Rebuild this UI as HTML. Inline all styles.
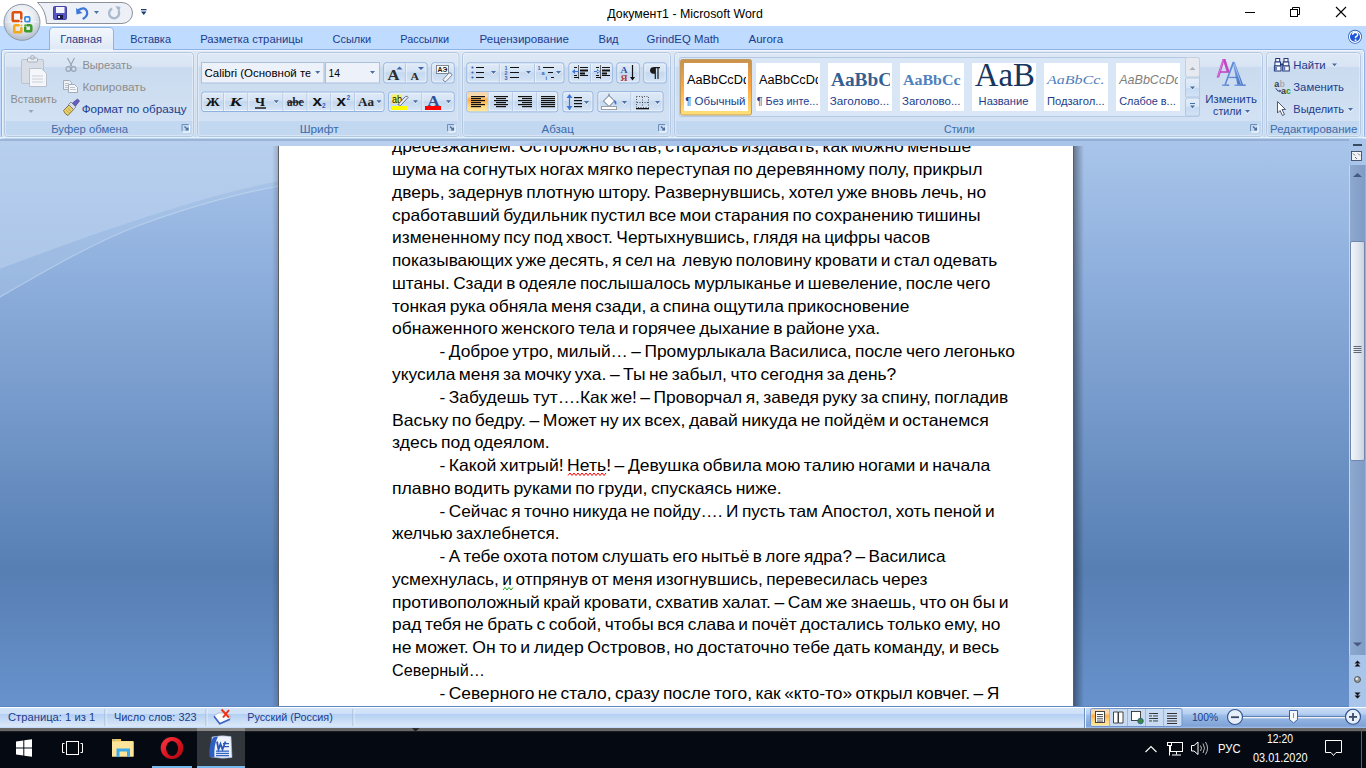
<!DOCTYPE html>
<html><head><meta charset="utf-8"><title>Документ1 - Microsoft Word</title>
<style>
html,body{margin:0;padding:0;width:1366px;height:768px;overflow:hidden;background:#fff;}
svg{display:block;font-family:"Liberation Sans",sans-serif;}
</style></head><body>
<svg width="1366" height="768" viewBox="0 0 1366 768">

<defs>
<linearGradient id="docbg" x1="0" y1="0" x2="0" y2="1">
 <stop offset="0" stop-color="#A9C5EA"/>
 <stop offset="0.25" stop-color="#8DAEDC"/>
 <stop offset="0.76" stop-color="#577FB4"/>
 <stop offset="1" stop-color="#6892CC"/>
</linearGradient>
<linearGradient id="grp" x1="0" y1="0" x2="0" y2="1">
 <stop offset="0" stop-color="#DEE8F5"/>
 <stop offset="0.165" stop-color="#D9E5F4"/>
 <stop offset="0.175" stop-color="#CADBEF"/>
 <stop offset="0.8" stop-color="#D2E1F3"/>
 <stop offset="1" stop-color="#D6E4F4"/>
</linearGradient>
<linearGradient id="lbl" x1="0" y1="0" x2="0" y2="1">
 <stop offset="0" stop-color="#C5DAF1"/>
 <stop offset="1" stop-color="#C1D8F0"/>
</linearGradient>
<linearGradient id="panel" x1="0" y1="0" x2="0" y2="1">
 <stop offset="0" stop-color="#DBE6F5"/>
 <stop offset="1" stop-color="#C6D9F0"/>
</linearGradient>
<linearGradient id="acttab" x1="0" y1="0" x2="0" y2="1">
 <stop offset="0" stop-color="#F4F8FD"/>
 <stop offset="1" stop-color="#DDE8F6"/>
</linearGradient>
<linearGradient id="btn" x1="0" y1="0" x2="0" y2="1">
 <stop offset="0" stop-color="#DFEAF7"/>
 <stop offset="0.42" stop-color="#D5E3F4"/>
 <stop offset="0.5" stop-color="#C5D8EF"/>
 <stop offset="1" stop-color="#D8E6F6"/>
</linearGradient>
<linearGradient id="orng" x1="0" y1="0" x2="0" y2="1">
 <stop offset="0" stop-color="#F6D2A6"/>
 <stop offset="0.2" stop-color="#FCDCAE"/>
 <stop offset="0.4" stop-color="#FFAC46"/>
 <stop offset="0.7" stop-color="#FFD580"/>
 <stop offset="1" stop-color="#FFEA9A"/>
</linearGradient>
<linearGradient id="selsty" x1="0" y1="0" x2="0" y2="1">
 <stop offset="0" stop-color="#C7924E"/>
 <stop offset="0.5" stop-color="#FFA640"/>
 <stop offset="1" stop-color="#FFE27A"/>
</linearGradient>
<linearGradient id="scrb" x1="0" y1="0" x2="0" y2="1">
 <stop offset="0" stop-color="#E4EEFA"/>
 <stop offset="0.5" stop-color="#D6E5F6"/>
 <stop offset="0.5" stop-color="#C5D9F2"/>
 <stop offset="1" stop-color="#D3E3F6"/>
</linearGradient>
<linearGradient id="pinkA" x1="0" y1="0" x2="0" y2="1">
 <stop offset="0" stop-color="#E070D8"/>
 <stop offset="1" stop-color="#A03AA8"/>
</linearGradient>
<linearGradient id="blueA" x1="0" y1="0" x2="1" y2="1">
 <stop offset="0" stop-color="#7FA8E8"/>
 <stop offset="1" stop-color="#3F6CC0"/>
</linearGradient>
<linearGradient id="status" x1="0" y1="0" x2="0" y2="1">
 <stop offset="0" stop-color="#D4E4F8"/>
 <stop offset="0.34" stop-color="#CFE1F8"/>
 <stop offset="0.37" stop-color="#B2CFF3"/>
 <stop offset="0.9" stop-color="#DAE7F7"/>
 <stop offset="1" stop-color="#C5DDFB"/>
</linearGradient>
<linearGradient id="statR" x1="0" y1="0" x2="0" y2="1">
 <stop offset="0" stop-color="#C8DCF6"/>
 <stop offset="0.3" stop-color="#B5CFF0"/>
 <stop offset="0.35" stop-color="#9DBEE8"/>
 <stop offset="0.9" stop-color="#7FA2D6"/>
 <stop offset="1" stop-color="#A6C2EA"/>
</linearGradient>
<linearGradient id="shL" x1="1" y1="0" x2="0" y2="0">
 <stop offset="0" stop-color="#000" stop-opacity="0.16"/>
 <stop offset="1" stop-color="#000" stop-opacity="0"/>
</linearGradient>
<linearGradient id="shR" x1="0" y1="0" x2="1" y2="0">
 <stop offset="0" stop-color="#000" stop-opacity="0.38"/>
 <stop offset="1" stop-color="#000" stop-opacity="0"/>
</linearGradient>
<linearGradient id="sbtrack" x1="0" y1="0" x2="1" y2="0">
 <stop offset="0" stop-color="#8FA9CF"/>
 <stop offset="1" stop-color="#7E9CC6"/>
</linearGradient>
<linearGradient id="sbthumb" x1="0" y1="0" x2="1" y2="0">
 <stop offset="0" stop-color="#F3F6FA"/>
 <stop offset="0.5" stop-color="#E1E7EF"/>
 <stop offset="1" stop-color="#C8D2DF"/>
</linearGradient>
<radialGradient id="obtn" cx="0.5" cy="0.35" r="0.6">
 <stop offset="0" stop-color="#FFFFFF"/>
 <stop offset="0.6" stop-color="#E6EAF0"/>
 <stop offset="1" stop-color="#B8C2D0"/>
</radialGradient>
</defs>

<rect x="0" y="0" width="1366" height="27" fill="#FFFFFF"/>
<rect x="0" y="26" width="1366" height="24" fill="#BFDBFF"/>
<rect x="0" y="49" width="1366" height="91" fill="#BFDBFF"/>
<rect x="1.5" y="49.5" width="1363" height="89" rx="3" fill="url(#panel)" stroke="#8DB2E3"/>
<rect x="2.5" y="50.5" width="1361" height="87" rx="2" fill="none" stroke="#FFFFFF" stroke-opacity="0.6"/>
<rect x="0" y="139" width="1366" height="568" fill="url(#docbg)"/>
<path d="M0,139 H560 C420,160 300,176 280,181 C200,196 90,235 0,269 Z" fill="#C4D9F2" fill-opacity="0.55"/>
<path d="M0,269 C90,235 200,196 280,181 C300,176 420,160 560,139 L560,150 C470,158 380,170 280,186 C240,193 190,207 140,225 C95,242 50,268 0,297 Z" fill="#B5CDEC" fill-opacity="0.35"/>
<path d="M0,297 C50,268 95,242 140,225 C190,207 240,193 280,186 C380,170 470,158 560,150" fill="none" stroke="#C6DAF2" stroke-opacity="0.6" stroke-width="1.2"/>
<rect x="0" y="139" width="1349" height="2" fill="#7F93B5" fill-opacity="0.45"/>
<rect x="272" y="146" width="6" height="561" fill="url(#shL)"/>
<rect x="1074" y="146" width="10" height="561" fill="url(#shR)"/>
<rect x="278" y="146" width="796" height="561" fill="#5E5E5E"/>
<rect x="279" y="146" width="794" height="561" fill="#FFFFFF"/>
<rect x="0" y="706" width="1366" height="22" fill="url(#status)"/>
<rect x="0" y="706" width="1366" height="1" fill="#5A85C0"/>
<rect x="0" y="707" width="1366" height="1" fill="#FFFFFF"/>
<rect x="0" y="728" width="1366" height="40" fill="#050A12"/>
<rect x="0" y="727" width="1366" height="1" fill="#C4DCFA"/>
<rect x="0" y="728" width="1366" height="3" fill="#686766"/>
<rect x="0" y="731" width="1366" height="1" fill="#1A1D22"/>
<clipPath id="pgclip"><rect x="279" y="146" width="794" height="561"/></clipPath>
<g clip-path="url(#pgclip)" font-size="16.5" fill="#000" word-spacing="-1.3">
<text x="392" y="152.3" textLength="579.3" lengthAdjust="spacingAndGlyphs" xml:space="preserve">дребезжанием. Осторожно встав, стараясь издавать, как можно меньше</text>
<text x="392" y="175.07" textLength="590.5" lengthAdjust="spacingAndGlyphs" xml:space="preserve">шума на согнутых ногах мягко переступая по деревянному полу, прикрыл</text>
<text x="392" y="197.84" textLength="594.1" lengthAdjust="spacingAndGlyphs" xml:space="preserve">дверь, задернув плотную штору. Развернувшись, хотел уже вновь лечь, но</text>
<text x="392" y="220.61" textLength="588.5" lengthAdjust="spacingAndGlyphs" xml:space="preserve">сработавший будильник пустил все мои старания по сохранению тишины</text>
<text x="392" y="243.38" textLength="538.1" lengthAdjust="spacingAndGlyphs" xml:space="preserve">измененному псу под хвост. Чертыхнувшись, глядя на цифры часов</text>
<text x="392" y="266.15" textLength="605.3" lengthAdjust="spacingAndGlyphs" xml:space="preserve">показывающих уже десять, я сел на  левую половину кровати и стал одевать</text>
<text x="392" y="288.92" textLength="598.3" lengthAdjust="spacingAndGlyphs" xml:space="preserve">штаны. Сзади в одеяле послышалось мурлыканье и шевеление, после чего</text>
<text x="392" y="311.69" textLength="517.5" lengthAdjust="spacingAndGlyphs" xml:space="preserve">тонкая рука обняла меня сзади, а спина ощутила прикосновение</text>
<text x="392" y="334.46" textLength="488.1" lengthAdjust="spacingAndGlyphs" xml:space="preserve">обнаженного женского тела и горячее дыхание в районе уха.</text>
<text x="439.5" y="357.23" textLength="575.5" lengthAdjust="spacingAndGlyphs" xml:space="preserve">- Доброе утро, милый… – Промурлыкала Василиса, после чего легонько</text>
<text x="392" y="380.0" textLength="504.3" lengthAdjust="spacingAndGlyphs" xml:space="preserve">укусила меня за мочку уха. – Ты не забыл, что сегодня за день?</text>
<text x="439.5" y="402.77" textLength="568.7" lengthAdjust="spacingAndGlyphs" xml:space="preserve">- Забудешь тут….Как же! – Проворчал я, заведя руку за спину, погладив</text>
<text x="392" y="425.54" textLength="596.7" lengthAdjust="spacingAndGlyphs" xml:space="preserve">Ваську по бедру. – Может ну их всех, давай никуда не пойдём и останемся</text>
<text x="392" y="448.31" textLength="157.7" lengthAdjust="spacingAndGlyphs" xml:space="preserve">здесь под одеялом.</text>
<text x="439.5" y="471.08" textLength="550.8" lengthAdjust="spacingAndGlyphs" xml:space="preserve">- Какой хитрый! Неть! – Девушка обвила мою талию ногами и начала</text>
<text x="392" y="493.85" textLength="389.7" lengthAdjust="spacingAndGlyphs" xml:space="preserve">плавно водить руками по груди, спускаясь ниже.</text>
<text x="439.5" y="516.62" textLength="555.2" lengthAdjust="spacingAndGlyphs" xml:space="preserve">- Сейчас я точно никуда не пойду…. И пусть там Апостол, хоть пеной и</text>
<text x="392" y="539.39" textLength="167.5" lengthAdjust="spacingAndGlyphs" xml:space="preserve">желчью захлебнется.</text>
<text x="439.5" y="562.16" textLength="506.0" lengthAdjust="spacingAndGlyphs" xml:space="preserve">- А тебе охота потом слушать его нытьё в логе ядра? – Василиса</text>
<text x="392" y="584.93" textLength="535.5" lengthAdjust="spacingAndGlyphs" xml:space="preserve">усмехнулась, и отпрянув от меня изогнувшись, перевесилась через</text>
<text x="392" y="607.7" textLength="616.5" lengthAdjust="spacingAndGlyphs" xml:space="preserve">противоположный край кровати, схватив халат. – Сам же знаешь, что он бы и</text>
<text x="392" y="630.47" textLength="608.5" lengthAdjust="spacingAndGlyphs" xml:space="preserve">рад тебя не брать с собой, чтобы вся слава и почёт достались только ему, но</text>
<text x="392" y="653.24" textLength="607.2" lengthAdjust="spacingAndGlyphs" xml:space="preserve">не может. Он то и лидер Островов, но достаточно тебе дать команду, и весь</text>
<text x="392" y="676.01" textLength="93.0" lengthAdjust="spacingAndGlyphs" xml:space="preserve">Северный…</text>
<text x="439.5" y="698.78" textLength="559.7" lengthAdjust="spacingAndGlyphs" xml:space="preserve">- Северного не стало, сразу после того, как «кто-то» открыл ковчег. – Я</text>
</g>
<path d="M568,475.5 L570,473.0 L572,475.5 L574,473.0 L576,475.5 L578,473.0 L580,475.5 L582,473.0 L584,475.5 L586,473.0 L588,475.5 L590,473.0 L592,475.5 L594,473.0 L596,475.5 L598,473.0 L600,475.5 L602,473.0 L604,475.5 L606,473.0" fill="none" stroke="#FF0000" stroke-width="1"/>
<path d="M503,590 L505,587.5 L507,590 L509,587.5 L511,590 L513,587.5" fill="none" stroke="#1FA01F" stroke-width="1"/>
<text x="607.3" y="18.3" font-size="12.5" fill="#000000" textLength="155.5" lengthAdjust="spacingAndGlyphs">Документ1 - Microsoft Word</text>
<rect x="1245" y="12" width="10" height="1" fill="#000"/>
<rect x="1290.5" y="9.5" width="7" height="7" fill="none" stroke="#000" stroke-width="1"/>
<path d="M1292.5,9.5 V7.5 H1299.5 V14.5 H1297.5" fill="none" stroke="#000" stroke-width="1"/>
<path d="M1336,7 L1346,17 M1346,7 L1336,17" stroke="#000" stroke-width="1.1"/>
<path d="M49.5,50 V31 Q49.5,27.5 53,27.5 H110 Q113.5,27.5 113.5,31 V50" fill="url(#acttab)" stroke="#8DB2E3"/>
<rect x="50" y="49" width="63" height="3" fill="#EEF4FB"/>
<text x="60.3" y="43.3" font-size="11.3" fill="#1C3C8C" textLength="41.6" lengthAdjust="spacingAndGlyphs">Главная</text>
<text x="130.3" y="43.3" font-size="11.3" fill="#1C3C8C" textLength="40.7" lengthAdjust="spacingAndGlyphs">Вставка</text>
<text x="200.2" y="43.3" font-size="11.3" fill="#1C3C8C" textLength="102.69999999999999" lengthAdjust="spacingAndGlyphs">Разметка страницы</text>
<text x="332.6" y="43.3" font-size="11.3" fill="#1C3C8C" textLength="38.6" lengthAdjust="spacingAndGlyphs">Ссылки</text>
<text x="400.3" y="43.3" font-size="11.3" fill="#1C3C8C" textLength="48.7" lengthAdjust="spacingAndGlyphs">Рассылки</text>
<text x="479.6" y="43.3" font-size="11.3" fill="#1C3C8C" textLength="89.39999999999999" lengthAdjust="spacingAndGlyphs">Рецензирование</text>
<text x="598.5" y="43.3" font-size="11.3" fill="#1C3C8C" textLength="20.1" lengthAdjust="spacingAndGlyphs">Вид</text>
<text x="646.6" y="43.3" font-size="11.3" fill="#1C3C8C" textLength="72.6" lengthAdjust="spacingAndGlyphs">GrindEQ Math</text>
<text x="748.5" y="43.3" font-size="11.3" fill="#1C3C8C" textLength="34.6" lengthAdjust="spacingAndGlyphs">Aurora</text>
<circle cx="1355" cy="36.8" r="7" fill="#3566B8"/>
<circle cx="1355" cy="36.8" r="5.6" fill="#2157D6" stroke="#FFFFFF" stroke-width="1.1"/>
<path d="M1352.6,34.8 Q1352.8,32.3 1355.2,32.3 Q1357.8,32.4 1357.6,34.8 Q1357.4,36.2 1355.6,37 V38.3" fill="none" stroke="#FFFFFF" stroke-width="1.5"/>
<rect x="1354.7" y="39.3" width="1.7" height="1.7" fill="#FFFFFF"/>
<rect x="3.5" y="51.5" width="191.0" height="86" rx="3.5" fill="#EEF4FB" fill-opacity="0.7"/>
<rect x="4.5" y="52.5" width="189.0" height="84" rx="3" fill="url(#grp)" stroke="#B3C7E0"/>
<path d="M5.0,121 H193.0 V133.5 Q193.0,136 190.5,136 H7.5 Q5.0,136 5.0,133.5 Z" fill="#C2D8F0"/>
<rect x="5.5" y="53.5" width="187.0" height="82" rx="2.5" fill="none" stroke="#FFFFFF" stroke-opacity="0.35"/>
<text x="51.2" y="133" font-size="11.3" fill="#3E6AAA" textLength="76.8" lengthAdjust="spacingAndGlyphs">Буфер обмена</text>
<rect x="196.5" y="51.5" width="263.5" height="86" rx="3.5" fill="#EEF4FB" fill-opacity="0.7"/>
<rect x="197.5" y="52.5" width="261.5" height="84" rx="3" fill="url(#grp)" stroke="#B3C7E0"/>
<path d="M198.0,121 H458.5 V133.5 Q458.5,136 456,136 H200.5 Q198.0,136 198.0,133.5 Z" fill="#C2D8F0"/>
<rect x="198.5" y="53.5" width="259.5" height="82" rx="2.5" fill="none" stroke="#FFFFFF" stroke-opacity="0.35"/>
<text x="299.7" y="133" font-size="11.3" fill="#3E6AAA" textLength="38.9" lengthAdjust="spacingAndGlyphs">Шрифт</text>
<rect x="461.5" y="51.5" width="210.0" height="86" rx="3.5" fill="#EEF4FB" fill-opacity="0.7"/>
<rect x="462.5" y="52.5" width="208.0" height="84" rx="3" fill="url(#grp)" stroke="#B3C7E0"/>
<path d="M463.0,121 H670.0 V133.5 Q670.0,136 667.5,136 H465.5 Q463.0,136 463.0,133.5 Z" fill="#C2D8F0"/>
<rect x="463.5" y="53.5" width="206.0" height="82" rx="2.5" fill="none" stroke="#FFFFFF" stroke-opacity="0.35"/>
<text x="541.5" y="133" font-size="11.3" fill="#3E6AAA" textLength="32.4" lengthAdjust="spacingAndGlyphs">Абзац</text>
<rect x="673.5" y="51.5" width="590.0" height="86" rx="3.5" fill="#EEF4FB" fill-opacity="0.7"/>
<rect x="674.5" y="52.5" width="588.0" height="84" rx="3" fill="url(#grp)" stroke="#B3C7E0"/>
<path d="M675.0,121 H1262.0 V133.5 Q1262.0,136 1259.5,136 H677.5 Q675.0,136 675.0,133.5 Z" fill="#C2D8F0"/>
<rect x="675.5" y="53.5" width="586.0" height="82" rx="2.5" fill="none" stroke="#FFFFFF" stroke-opacity="0.35"/>
<text x="944" y="133" font-size="11.3" fill="#3E6AAA" textLength="30.6" lengthAdjust="spacingAndGlyphs">Стили</text>
<rect x="1265.5" y="51.5" width="96.0" height="86" rx="3.5" fill="#EEF4FB" fill-opacity="0.7"/>
<rect x="1266.5" y="52.5" width="94.0" height="84" rx="3" fill="url(#grp)" stroke="#B3C7E0"/>
<path d="M1267.0,121 H1360.0 V133.5 Q1360.0,136 1357.5,136 H1269.5 Q1267.0,136 1267.0,133.5 Z" fill="#C2D8F0"/>
<rect x="1267.5" y="53.5" width="92.0" height="82" rx="2.5" fill="none" stroke="#FFFFFF" stroke-opacity="0.35"/>
<text x="1270" y="133" font-size="11.3" fill="#3E6AAA" textLength="87.3" lengthAdjust="spacingAndGlyphs">Редактирование</text>
<rect x="0" y="137" width="1366" height="1.5" fill="#E4F4FF"/>
<path d="M182.0,131 V124.5 H188.5" fill="none" stroke="#6D8DB8" stroke-width="1"/>
<path d="M183.0,132 H189.5 V125.5" fill="none" stroke="#FFFFFF" stroke-width="1"/>
<path d="M184.5,126.5 L188.0,130 M188.0,127.5 V130 H185.5" fill="none" stroke="#4C6D9C" stroke-width="1.2"/>
<path d="M447.5,131 V124.5 H454" fill="none" stroke="#6D8DB8" stroke-width="1"/>
<path d="M448.5,132 H455 V125.5" fill="none" stroke="#FFFFFF" stroke-width="1"/>
<path d="M450,126.5 L453.5,130 M453.5,127.5 V130 H451" fill="none" stroke="#4C6D9C" stroke-width="1.2"/>
<path d="M658.5,131 V124.5 H665" fill="none" stroke="#6D8DB8" stroke-width="1"/>
<path d="M659.5,132 H666 V125.5" fill="none" stroke="#FFFFFF" stroke-width="1"/>
<path d="M661,126.5 L664.5,130 M664.5,127.5 V130 H662" fill="none" stroke="#4C6D9C" stroke-width="1.2"/>
<path d="M1250.5,131 V124.5 H1257" fill="none" stroke="#6D8DB8" stroke-width="1"/>
<path d="M1251.5,132 H1258 V125.5" fill="none" stroke="#FFFFFF" stroke-width="1"/>
<path d="M1253,126.5 L1256.5,130 M1256.5,127.5 V130 H1254" fill="none" stroke="#4C6D9C" stroke-width="1.2"/>
<rect x="21.5" y="59.5" width="22" height="24" rx="1.5" fill="#D9DEE6" stroke="#B9C2CE"/>
<rect x="27.5" y="58" width="10" height="4" rx="1" fill="#E9EDF2" stroke="#A8B2BF"/>
<circle cx="32.5" cy="57.5" r="2" fill="none" stroke="#A8B2BF"/>
<path d="M29.5,68.5 H41.5 L46.5,73.5 V86.5 H29.5 Z" fill="#F4F6F9" stroke="#B8C0CC"/>
<rect x="32" y="75.5" width="11" height="1" fill="#C9D0DA"/>
<rect x="32" y="78.5" width="11" height="1" fill="#C9D0DA"/>
<rect x="32" y="81.5" width="11" height="1" fill="#C9D0DA"/>
<text x="10.4" y="102.8" font-size="11.3" fill="#8C8C8C" textLength="46.5" lengthAdjust="spacingAndGlyphs">Вставить</text>
<path d="M28.5,110 h5 l-2.5,3 z" fill="#9CA3AD"/>
<g fill="none" stroke="#9AA5B5" stroke-width="1.2"><path d="M67.5,58 L72,66.5 M74.5,58 L70,66.5"/><circle cx="68.3" cy="69" r="2.3"/><circle cx="73.7" cy="69" r="2.3"/></g>
<text x="82.4" y="69.3" font-size="11.3" fill="#8D8D8D" textLength="49.6" lengthAdjust="spacingAndGlyphs">Вырезать</text>
<path d="M63.5,80.5 H69.5 L71.5,82.5 V89.5 H63.5 Z" fill="#EEF1F5" stroke="#A3ACB8"/>
<rect x="65" y="83" width="4" height="0.8" fill="#B0B8C4"/><rect x="65" y="85" width="4" height="0.8" fill="#B0B8C4"/><rect x="65" y="87" width="4" height="0.8" fill="#B0B8C4"/>
<path d="M68.5,84.5 H74.5 L77.5,87.5 V92.5 H68.5 Z" fill="#F5F7FA" stroke="#A3ACB8"/>
<rect x="70" y="87" width="5" height="0.8" fill="#B0B8C4"/><rect x="70" y="89" width="6" height="0.8" fill="#B0B8C4"/>
<text x="82.4" y="91.1" font-size="11.3" fill="#8D8D8D" textLength="63.5" lengthAdjust="spacingAndGlyphs">Копировать</text>
<path d="M63.5,110.5 L69,105 L73.5,109.5 L68,115.5 Q65,114.5 63.5,110.5 Z" fill="#E6CF6A" stroke="#6E5E2A" stroke-width="0.8"/>
<path d="M66,110 L70,113.5 M67.5,108 L71.5,111.5" stroke="#B89A3A" stroke-width="0.7"/>
<path d="M68.5,104.5 L71,102 L76,107 L73.5,109.5 Z" fill="#D8DCE4" stroke="#6A7080" stroke-width="0.7"/>
<path d="M72.5,103 L77.5,99 L79.5,101 L75.5,106 Z" fill="#6A5CC0" stroke="#3A3080" stroke-width="0.6"/>
<text x="81.7" y="112.9" font-size="11.3" fill="#1C3C8C" textLength="104.8" lengthAdjust="spacingAndGlyphs">Формат по образцу</text>
<rect x="201.5" y="62.5" width="122.5" height="20.5" fill="#EDF2FA" stroke="#ABC1DE"/>
<rect x="325.5" y="62.5" width="54" height="20.5" fill="#EDF2FA" stroke="#ABC1DE"/>
<clipPath id="fnclip"><rect x="203" y="63" width="107.5" height="20"/></clipPath>
<g clip-path="url(#fnclip)"><text x="204.5" y="76.8" font-size="11.5" fill="#000000" textLength="107" lengthAdjust="spacingAndGlyphs">Calibri (Основной те</text></g>
<path d="M315.2,72 h5 l-2.5,3 z" fill="#FFFFFF" fill-opacity="0.8"/><path d="M315.2,71 h5 l-2.5,3 z" fill="#4A6FA5"/>
<text x="328.6" y="76.8" font-size="11.5" fill="#000000" textLength="11.5" lengthAdjust="spacingAndGlyphs">14</text>
<path d="M370,72 h5 l-2.5,3 z" fill="#FFFFFF" fill-opacity="0.8"/><path d="M370,71 h5 l-2.5,3 z" fill="#4A6FA5"/>
<rect x="383.8" y="62.8" width="43.19999999999999" height="20.10000000000001" rx="2.2" fill="url(#btn)" stroke="#8FB1DE"/>
<rect x="384.8" y="63.8" width="41.19999999999999" height="18.10000000000001" rx="1.5" fill="none" stroke="#FFFFFF" stroke-opacity="0.55"/>
<rect x="404.9" y="63.3" width="1" height="19.10000000000001" fill="#B3C9E6"/>
<rect x="405.9" y="63.3" width="1" height="19.10000000000001" fill="#EEF4FB" fill-opacity="0.8"/>
<text x="387.5" y="79.5" font-size="15" fill="#2B2B2B" font-family="Liberation Serif" textLength="12" lengthAdjust="spacingAndGlyphs" font-weight="bold">A</text>
<path d="M396.5,69.5 h6 l-3,-3 z" fill="#3F67A8"/>
<text x="410.5" y="79.5" font-size="11" fill="#2B2B2B" font-family="Liberation Serif" textLength="8.5" lengthAdjust="spacingAndGlyphs" font-weight="bold">A</text>
<path d="M418,67 h6 l-3,3 z" fill="#3F67A8"/>
<rect x="431.7" y="62.8" width="22.400000000000034" height="20.10000000000001" rx="2.2" fill="url(#btn)" stroke="#8FB1DE"/>
<rect x="432.7" y="63.8" width="20.400000000000034" height="18.10000000000001" rx="1.5" fill="none" stroke="#FFFFFF" stroke-opacity="0.55"/>
<rect x="436.5" y="65.5" width="12" height="8" fill="#FFFFFF" stroke="#7A8797"/>
<text x="437.5" y="72.3" font-size="7" fill="#222" textLength="10" lengthAdjust="spacingAndGlyphs" font-weight="bold">AЭ</text>
<path d="M443,79.5 L449,73 Q451.5,72.5 452,75 L446,81.5 Q443.5,82 443,79.5 Z" fill="#F4F6FA" stroke="#6D7E96" stroke-width="0.9"/>
<rect x="201.8" y="92.1" width="182.2" height="19.400000000000006" rx="2.2" fill="url(#btn)" stroke="#8FB1DE"/>
<rect x="202.8" y="93.1" width="180.2" height="17.400000000000006" rx="1.5" fill="none" stroke="#FFFFFF" stroke-opacity="0.55"/>
<rect x="223.1" y="92.6" width="1" height="18.400000000000006" fill="#B3C9E6"/>
<rect x="224.1" y="92.6" width="1" height="18.400000000000006" fill="#EEF4FB" fill-opacity="0.8"/>
<rect x="247.3" y="92.6" width="1" height="18.400000000000006" fill="#B3C9E6"/>
<rect x="248.3" y="92.6" width="1" height="18.400000000000006" fill="#EEF4FB" fill-opacity="0.8"/>
<rect x="282.5" y="92.6" width="1" height="18.400000000000006" fill="#B3C9E6"/>
<rect x="283.5" y="92.6" width="1" height="18.400000000000006" fill="#EEF4FB" fill-opacity="0.8"/>
<rect x="306.5" y="92.6" width="1" height="18.400000000000006" fill="#B3C9E6"/>
<rect x="307.5" y="92.6" width="1" height="18.400000000000006" fill="#EEF4FB" fill-opacity="0.8"/>
<rect x="330.3" y="92.6" width="1" height="18.400000000000006" fill="#B3C9E6"/>
<rect x="331.3" y="92.6" width="1" height="18.400000000000006" fill="#EEF4FB" fill-opacity="0.8"/>
<rect x="354.1" y="92.6" width="1" height="18.400000000000006" fill="#B3C9E6"/>
<rect x="355.1" y="92.6" width="1" height="18.400000000000006" fill="#EEF4FB" fill-opacity="0.8"/>
<text x="205.8" y="105.8" font-size="13" fill="#111111" font-family="Liberation Serif" textLength="14" lengthAdjust="spacingAndGlyphs" font-weight="bold">Ж</text>
<text x="229.5" y="105.8" font-size="13" fill="#111111" font-family="Liberation Serif" textLength="12.5" lengthAdjust="spacingAndGlyphs" font-weight="bold" font-style="italic">К</text>
<text x="255" y="105.8" font-size="13" fill="#111111" font-family="Liberation Serif" textLength="10" lengthAdjust="spacingAndGlyphs" font-weight="bold">Ч</text>
<rect x="255" y="107.3" width="11" height="1.4" fill="#111"/>
<path d="M273.8,101.3 h5 l-2.5,3 z" fill="#FFFFFF" fill-opacity="0.8"/><path d="M273.8,100.3 h5 l-2.5,3 z" fill="#4A6FA5"/>
<text x="287" y="105.8" font-size="11.5" fill="#222222" font-family="Liberation Serif" textLength="16.5" lengthAdjust="spacingAndGlyphs" font-weight="bold">abc</text>
<rect x="287" y="101.5" width="17" height="1.2" fill="#222"/>
<text x="312.5" y="105.8" font-size="14" fill="#111111" textLength="9.5" lengthAdjust="spacingAndGlyphs" font-weight="bold">x</text>
<text x="322" y="108" font-size="6.5" fill="#2F5FC0" font-weight="bold">2</text>
<text x="336.5" y="105.8" font-size="14" fill="#111111" textLength="9.5" lengthAdjust="spacingAndGlyphs" font-weight="bold">x</text>
<text x="346.5" y="100.3" font-size="6.5" fill="#2F5FC0" font-weight="bold">2</text>
<text x="358" y="106" font-size="13" fill="#222222" font-family="Liberation Serif" textLength="16" lengthAdjust="spacingAndGlyphs" font-weight="bold">Aa</text>
<path d="M376.5,101.3 h5 l-2.5,3 z" fill="#FFFFFF" fill-opacity="0.8"/><path d="M376.5,100.3 h5 l-2.5,3 z" fill="#4A6FA5"/>
<rect x="388.7" y="92.1" width="65.40000000000003" height="19.400000000000006" rx="2.2" fill="url(#btn)" stroke="#8FB1DE"/>
<rect x="389.7" y="93.1" width="63.400000000000034" height="17.400000000000006" rx="1.5" fill="none" stroke="#FFFFFF" stroke-opacity="0.55"/>
<rect x="421.3" y="92.6" width="1" height="18.400000000000006" fill="#B3C9E6"/>
<rect x="422.3" y="92.6" width="1" height="18.400000000000006" fill="#EEF4FB" fill-opacity="0.8"/>
<rect x="392" y="94.5" width="10" height="9" fill="#F7F060"/>
<text x="392" y="103" font-size="10" fill="#111" textLength="10" lengthAdjust="spacingAndGlyphs">ab</text>
<path d="M398,104.5 L405.5,96.5 Q407.5,95.5 408,97.5 L400.5,105.5 Z" fill="#F2F4F8" stroke="#4D5E7E" stroke-width="0.9"/>
<rect x="392" y="106" width="16" height="4" fill="#FFFF00"/>
<path d="M413,101.3 h5 l-2.5,3 z" fill="#FFFFFF" fill-opacity="0.8"/><path d="M413,100.3 h5 l-2.5,3 z" fill="#4A6FA5"/>
<text x="427.5" y="105.5" font-size="15" fill="#2E4F94" font-family="Liberation Serif" textLength="12" lengthAdjust="spacingAndGlyphs" font-weight="bold">A</text>
<rect x="425" y="106" width="16" height="4" fill="#FF0000"/>
<path d="M446,101.3 h5 l-2.5,3 z" fill="#FFFFFF" fill-opacity="0.8"/><path d="M446,100.3 h5 l-2.5,3 z" fill="#4A6FA5"/>
<rect x="466.9" y="62.9" width="97.0" height="20.000000000000007" rx="2.2" fill="url(#btn)" stroke="#8FB1DE"/>
<rect x="467.9" y="63.9" width="95.0" height="18.000000000000007" rx="1.5" fill="none" stroke="#FFFFFF" stroke-opacity="0.55"/>
<rect x="498.9" y="63.4" width="1" height="19.000000000000007" fill="#B3C9E6"/>
<rect x="499.9" y="63.4" width="1" height="19.000000000000007" fill="#EEF4FB" fill-opacity="0.8"/>
<rect x="534.0" y="63.4" width="1" height="19.000000000000007" fill="#B3C9E6"/>
<rect x="535.0" y="63.4" width="1" height="19.000000000000007" fill="#EEF4FB" fill-opacity="0.8"/>
<circle cx="472.5" cy="67.5" r="1.1" fill="#3C64B0"/>
<rect x="476" y="67.0" width="8" height="1" fill="#111"/>
<rect x="510" y="67.0" width="9" height="1" fill="#111"/>
<circle cx="472.5" cy="72.5" r="1.1" fill="#3C64B0"/>
<rect x="476" y="72.0" width="8" height="1" fill="#111"/>
<rect x="510" y="72.0" width="9" height="1" fill="#111"/>
<circle cx="472.5" cy="77.5" r="1.1" fill="#3C64B0"/>
<rect x="476" y="77.0" width="8" height="1" fill="#111"/>
<rect x="510" y="77.0" width="9" height="1" fill="#111"/>
<text x="504.5" y="70" font-size="5.5" fill="#3C64B0" font-weight="bold">1</text>
<text x="504.5" y="75" font-size="5.5" fill="#3C64B0" font-weight="bold">2</text>
<text x="504.5" y="80" font-size="5.5" fill="#3C64B0" font-weight="bold">3</text>
<path d="M491,72 h5 l-2.5,3 z" fill="#FFFFFF" fill-opacity="0.8"/><path d="M491,71 h5 l-2.5,3 z" fill="#4A6FA5"/>
<path d="M526,72 h5 l-2.5,3 z" fill="#FFFFFF" fill-opacity="0.8"/><path d="M526,71 h5 l-2.5,3 z" fill="#4A6FA5"/>
<text x="537.5" y="70" font-size="5.5" fill="#3C64B0" font-weight="bold">1</text>
<rect x="543" y="67" width="11" height="1" fill="#111"/>
<text x="541.5" y="75" font-size="5.5" fill="#3C64B0" font-weight="bold">a</text>
<rect x="548" y="72" width="5" height="1" fill="#111"/>
<text x="545.5" y="80" font-size="5.5" fill="#3C64B0" font-weight="bold">i</text>
<rect x="551" y="77" width="3" height="1" fill="#111"/>
<path d="M556,72 h5 l-2.5,3 z" fill="#FFFFFF" fill-opacity="0.8"/><path d="M556,71 h5 l-2.5,3 z" fill="#4A6FA5"/>
<rect x="569.0" y="62.9" width="43.200000000000045" height="20.000000000000007" rx="2.2" fill="url(#btn)" stroke="#8FB1DE"/>
<rect x="570.0" y="63.9" width="41.200000000000045" height="18.000000000000007" rx="1.5" fill="none" stroke="#FFFFFF" stroke-opacity="0.55"/>
<rect x="590.1" y="63.4" width="1" height="19.000000000000007" fill="#B3C9E6"/>
<rect x="591.1" y="63.4" width="1" height="19.000000000000007" fill="#EEF4FB" fill-opacity="0.8"/>
<rect x="574" y="67" width="3" height="1" fill="#111"/><rect x="580" y="67" width="8" height="1" fill="#111"/>
<rect x="580" y="69.5" width="8" height="2" fill="#111"/><rect x="580" y="72.5" width="5" height="2" fill="#111"/>
<rect x="574" y="75" width="3" height="1" fill="#111"/><rect x="580" y="75" width="8" height="1" fill="#111"/>
<rect x="574" y="77" width="5" height="1" fill="#111"/><rect x="578" y="65" width="1" height="14" fill="#111" fill-opacity="0.6"/>
<path d="M572,71.5 L575,69 V74 Z M574,71 h5 v1 h-5z" fill="#3E74D6"/>
<rect x="596" y="67" width="3" height="1" fill="#111"/><rect x="602" y="67" width="8" height="1" fill="#111"/>
<rect x="602" y="69.5" width="8" height="2" fill="#111"/><rect x="602" y="72.5" width="5" height="2" fill="#111"/>
<rect x="596" y="75" width="3" height="1" fill="#111"/><rect x="602" y="75" width="8" height="1" fill="#111"/>
<rect x="596" y="77" width="5" height="1" fill="#111"/><rect x="600" y="65" width="1" height="14" fill="#111" fill-opacity="0.6"/>
<path d="M600,71.5 L597,69 V74 Z M594,71 h5 v1 h-5z" fill="#3E74D6"/>
<rect x="616.9" y="62.9" width="22.300000000000068" height="20.000000000000007" rx="2.2" fill="url(#btn)" stroke="#8FB1DE"/>
<rect x="617.9" y="63.9" width="20.300000000000068" height="18.000000000000007" rx="1.5" fill="none" stroke="#FFFFFF" stroke-opacity="0.55"/>
<text x="620.5" y="72.5" font-size="9" fill="#2F56A6" font-family="Liberation Serif" textLength="7" lengthAdjust="spacingAndGlyphs" font-weight="bold">A</text>
<text x="620.5" y="81" font-size="9" fill="#B0403A" font-family="Liberation Serif" textLength="7" lengthAdjust="spacingAndGlyphs" font-weight="bold">Я</text>
<path d="M632.5,65 V79" stroke="#111" stroke-width="1.2"/><path d="M630,77 L632.5,80.5 L635,77 Z" fill="#111"/>
<rect x="643.8" y="62.9" width="22.40000000000009" height="20.000000000000007" rx="2.2" fill="url(#btn)" stroke="#8FB1DE"/>
<rect x="644.8" y="63.9" width="20.40000000000009" height="18.000000000000007" rx="1.5" fill="none" stroke="#FFFFFF" stroke-opacity="0.55"/>
<path d="M654.5,67 H660 V68.3 H658.6 V79 H657.4 V68.3 H655.9 V79 H654.7 V73.8 Q650,73.8 650,70.4 Q650,67 654.5,67 Z" fill="#1A1A1A"/>
<rect x="466.9" y="91.7" width="90.80000000000007" height="20.099999999999994" rx="2.2" fill="url(#btn)" stroke="#8FB1DE"/>
<rect x="467.9" y="92.7" width="88.80000000000007" height="18.099999999999994" rx="1.5" fill="none" stroke="#FFFFFF" stroke-opacity="0.55"/>
<path d="M467.4,92.2 H488.2 V111.3 H467.4 Z" fill="url(#orng)"/>
<rect x="487.7" y="92.2" width="1" height="19.099999999999994" fill="#B3C9E6"/>
<rect x="488.7" y="92.2" width="1" height="19.099999999999994" fill="#EEF4FB" fill-opacity="0.8"/>
<rect x="512.2" y="92.2" width="1" height="19.099999999999994" fill="#B3C9E6"/>
<rect x="513.2" y="92.2" width="1" height="19.099999999999994" fill="#EEF4FB" fill-opacity="0.8"/>
<rect x="536.2" y="92.2" width="1" height="19.099999999999994" fill="#B3C9E6"/>
<rect x="537.2" y="92.2" width="1" height="19.099999999999994" fill="#EEF4FB" fill-opacity="0.8"/>
<rect x="471" y="96" width="14" height="1.2" fill="#111"/>
<rect x="494" y="96" width="14" height="1.2" fill="#111"/>
<rect x="518" y="96" width="14" height="1.2" fill="#111"/>
<rect x="541" y="96" width="14" height="1.2" fill="#111"/>
<rect x="471" y="98" width="10" height="1.2" fill="#111"/>
<rect x="496" y="98" width="10" height="1.2" fill="#111"/>
<rect x="522" y="98" width="10" height="1.2" fill="#111"/>
<rect x="541" y="98" width="14" height="1.2" fill="#111"/>
<rect x="471" y="100" width="14" height="1.2" fill="#111"/>
<rect x="494" y="100" width="14" height="1.2" fill="#111"/>
<rect x="518" y="100" width="14" height="1.2" fill="#111"/>
<rect x="541" y="100" width="14" height="1.2" fill="#111"/>
<rect x="471" y="102" width="10" height="1.2" fill="#111"/>
<rect x="496" y="102" width="10" height="1.2" fill="#111"/>
<rect x="522" y="102" width="10" height="1.2" fill="#111"/>
<rect x="541" y="102" width="14" height="1.2" fill="#111"/>
<rect x="471" y="104" width="14" height="1.2" fill="#111"/>
<rect x="494" y="104" width="14" height="1.2" fill="#111"/>
<rect x="518" y="104" width="14" height="1.2" fill="#111"/>
<rect x="541" y="104" width="14" height="1.2" fill="#111"/>
<rect x="471" y="106" width="10" height="1.2" fill="#111"/>
<rect x="496" y="106" width="10" height="1.2" fill="#111"/>
<rect x="522" y="106" width="10" height="1.2" fill="#111"/>
<rect x="541" y="106" width="14" height="1.2" fill="#111"/>
<rect x="562.9" y="91.7" width="30.0" height="20.099999999999994" rx="2.2" fill="url(#btn)" stroke="#8FB1DE"/>
<rect x="563.9" y="92.7" width="28.0" height="18.099999999999994" rx="1.5" fill="none" stroke="#FFFFFF" stroke-opacity="0.55"/>
<path d="M569.5,95 V110" stroke="#3E74D6" stroke-width="1.2"/><path d="M566.5,98 L569.5,94 L572.5,98 Z M566.5,106 L569.5,110 L572.5,106 Z" fill="#3E74D6"/>
<rect x="574" y="97" width="8" height="1.2" fill="#111"/>
<rect x="574" y="100" width="8" height="1.2" fill="#111"/>
<rect x="574" y="103" width="8" height="1.2" fill="#111"/>
<rect x="574" y="106" width="8" height="1.2" fill="#111"/>
<path d="M584,102 h5 l-2.5,3 z" fill="#FFFFFF" fill-opacity="0.8"/><path d="M584,101 h5 l-2.5,3 z" fill="#4A6FA5"/>
<rect x="597.9" y="91.7" width="65.10000000000002" height="20.099999999999994" rx="2.2" fill="url(#btn)" stroke="#8FB1DE"/>
<rect x="598.9" y="92.7" width="63.10000000000002" height="18.099999999999994" rx="1.5" fill="none" stroke="#FFFFFF" stroke-opacity="0.55"/>
<rect x="630.4" y="92.2" width="1" height="19.099999999999994" fill="#B3C9E6"/>
<rect x="631.4" y="92.2" width="1" height="19.099999999999994" fill="#EEF4FB" fill-opacity="0.8"/>
<path d="M603.5,101 L609,95.5 L614.5,101 L609,106.5 Z" fill="#FFFFFF" stroke="#4A5C7A" stroke-width="0.9"/>
<path d="M609,96 V93.5" stroke="#6A7890"/><path d="M614,100 Q617.5,101 616,105 Q614,103 614,100 Z" fill="#3D6FC8"/>
<rect x="601.5" y="106.5" width="15" height="3" fill="#FFFFFF" stroke="#9AA0A8"/>
<path d="M622,102 h5 l-2.5,3 z" fill="#FFFFFF" fill-opacity="0.8"/><path d="M622,101 h5 l-2.5,3 z" fill="#4A6FA5"/>
<rect x="636.5" y="96.5" width="12" height="11" fill="none" stroke="#333" stroke-width="0.8" stroke-dasharray="1,1.5"/>
<path d="M642.5,97 V107 M637,102.5 H648" fill="none" stroke="#333" stroke-width="0.8" stroke-dasharray="1,1.5"/>
<rect x="636" y="108" width="13" height="1.3" fill="#111"/>
<path d="M655,102 h5 l-2.5,3 z" fill="#FFFFFF" fill-opacity="0.8"/><path d="M655,101 h5 l-2.5,3 z" fill="#4A6FA5"/>
<rect x="679.5" y="57.5" width="520" height="59" rx="2" fill="#D9E6F6" stroke="#B3C8E3"/>
<rect x="680.5" y="59.5" width="71" height="55.5" rx="2" fill="url(#selsty)" stroke="#C29A5E"/>
<rect x="684" y="63" width="64" height="48" fill="#FFFFFF"/>
<rect x="756" y="63" width="64" height="48" fill="#FFFFFF"/>
<rect x="828" y="63" width="64" height="48" fill="#FFFFFF"/>
<rect x="900" y="63" width="64" height="48" fill="#FFFFFF"/>
<rect x="972" y="63" width="64" height="48" fill="#FFFFFF"/>
<rect x="1044" y="63" width="64" height="48" fill="#FFFFFF"/>
<rect x="1116" y="63" width="64" height="48" fill="#FFFFFF"/>
<clipPath id="st1"><rect x="684" y="63" width="62" height="48"/></clipPath><clipPath id="st2"><rect x="756" y="63" width="62" height="48"/></clipPath><clipPath id="st7"><rect x="1116" y="63" width="62" height="48"/></clipPath>
<g clip-path="url(#st1)"><text x="687" y="84" font-size="12.5" fill="#000000" textLength="63" lengthAdjust="spacingAndGlyphs">AaBbCcDd</text></g>
<text x="685.2" y="105.4" font-size="11.3" fill="#1C3C8C" textLength="60.3" lengthAdjust="spacingAndGlyphs">¶ Обычный</text>
<g clip-path="url(#st2)"><text x="759" y="84" font-size="12.5" fill="#000000" textLength="63" lengthAdjust="spacingAndGlyphs">AaBbCcDd</text></g>
<text x="756.8" y="105.4" font-size="11.3" fill="#1C3C8C" textLength="61.6" lengthAdjust="spacingAndGlyphs">¶ Без инте...</text>
<clipPath id="st3"><rect x="828" y="63" width="62" height="48"/></clipPath>
<g clip-path="url(#st3)"><text x="830.9" y="85.5" font-size="18" fill="#365F91" font-family="Liberation Serif" textLength="70" lengthAdjust="spacingAndGlyphs" font-weight="bold">AaBbCc</text></g>
<text x="829.8" y="105.4" font-size="11.3" fill="#1C3C8C" textLength="59.5" lengthAdjust="spacingAndGlyphs">Заголово...</text>
<text x="903" y="85" font-size="14" fill="#4F81BD" font-family="Liberation Serif" textLength="57.5" lengthAdjust="spacingAndGlyphs" font-weight="bold">AaBbCc</text>
<text x="902" y="105.4" font-size="11.3" fill="#1C3C8C" textLength="58.5" lengthAdjust="spacingAndGlyphs">Заголово...</text>
<clipPath id="st5"><rect x="972" y="63" width="64" height="48"/></clipPath>
<g clip-path="url(#st5)"><text x="974.8" y="85.5" font-size="33" fill="#17365D" font-family="Liberation Serif" textLength="60" lengthAdjust="spacingAndGlyphs">AaB</text></g>
<text x="978.6" y="105.4" font-size="11.3" fill="#1C3C8C" textLength="49.8" lengthAdjust="spacingAndGlyphs">Название</text>
<text x="1046.9" y="83.5" font-size="13" fill="#4F81BD" font-family="Liberation Serif" textLength="57.6" lengthAdjust="spacingAndGlyphs" font-style="italic">AaBbCc.</text>
<text x="1046.9" y="105.4" font-size="11.3" fill="#1C3C8C" textLength="57.6" lengthAdjust="spacingAndGlyphs">Подзагол...</text>
<g clip-path="url(#st7)"><text x="1119.2" y="83.5" font-size="13" fill="#808080" textLength="62" lengthAdjust="spacingAndGlyphs" font-style="italic">AaBbCcDd</text></g>
<text x="1119.2" y="105.4" font-size="11.3" fill="#1C3C8C" textLength="56.5" lengthAdjust="spacingAndGlyphs">Слабое в...</text>
<rect x="1185.5" y="57.5" width="14" height="19.5" rx="2" fill="#E6EAF0" stroke="#C5D0DE"/>
<path d="M1189.5,70 h6 l-3,-3 z" fill="#A6AEB8"/>
<rect x="1185.5" y="78" width="14" height="19" rx="1" fill="url(#scrb)" stroke="#B3C8E3"/>
<path d="M1190,87.5 h5 l-2.5,3 z" fill="#FFFFFF" fill-opacity="0.8"/><path d="M1190,86.5 h5 l-2.5,3 z" fill="#4A6FA5"/>
<rect x="1185.5" y="98" width="14" height="18" rx="2" fill="url(#scrb)" stroke="#B3C8E3"/>
<rect x="1190" y="103" width="5" height="1" fill="#4A6FA5"/>
<path d="M1190,106.5 h5 l-2.5,3 z" fill="#FFFFFF" fill-opacity="0.8"/><path d="M1190,105.5 h5 l-2.5,3 z" fill="#4A6FA5"/>
<g fill="#C444C4"><path d="M1222.6,59 H1225.4 L1229.6,72 H1226.8 Z"/><path d="M1222.6,59 H1224.8 L1219.2,77.5 H1216.6 Z"/><rect x="1220" y="71.2" width="9" height="1.6"/></g>
<path d="M1223.2,59.6 L1218,76.8" stroke="#E898E8" stroke-width="0.6"/>
<g fill="url(#blueA)"><path d="M1232.6,61.8 H1234.6 L1243.2,85 H1237.4 Z"/><path d="M1232.6,61.8 L1234,63.2 L1225.8,85 H1224.2 Z"/><rect x="1227.3" y="76.7" width="11" height="1.4"/><rect x="1222" y="84.4" width="7.2" height="1.4"/><rect x="1234.5" y="84.4" width="11.2" height="1.4"/></g>
<path d="M1234.3,64 L1241,84" stroke="#A8C8F4" stroke-width="0.8"/>
<text x="1205.3" y="102.6" font-size="11.3" fill="#1C3C8C" textLength="51.6" lengthAdjust="spacingAndGlyphs">Изменить</text>
<text x="1213.1" y="115.4" font-size="11.3" fill="#1C3C8C" textLength="28.3" lengthAdjust="spacingAndGlyphs">стили</text>
<path d="M1245,111 h5 l-2.5,3 z" fill="#FFFFFF" fill-opacity="0.8"/><path d="M1245,110 h5 l-2.5,3 z" fill="#4A6FA5"/>
<g stroke="#23387A" stroke-width="1" fill="#F4F7FC"><rect x="1275.7" y="58.5" width="4" height="3.5"/><rect x="1274.9" y="62" width="5.6" height="4"/><rect x="1274.4" y="66" width="6.6" height="5"/></g>
<rect x="1275.1000000000001" y="66.7" width="1.8" height="3.8" fill="#5A72B8"/>
<g stroke="#23387A" stroke-width="1" fill="#F4F7FC"><rect x="1284" y="58.5" width="4" height="3.5"/><rect x="1283.2" y="62" width="5.6" height="4"/><rect x="1282.7" y="66" width="6.6" height="5"/></g>
<rect x="1283.4" y="66.7" width="1.8" height="3.8" fill="#5A72B8"/>
<rect x="1280.4" y="63.5" width="2.6" height="2" fill="#23387A"/>
<text x="1293.3" y="69" font-size="11.3" fill="#1C3C8C" textLength="32.4" lengthAdjust="spacingAndGlyphs">Найти</text>
<path d="M1332,64.5 h5 l-2.5,3 z" fill="#FFFFFF" fill-opacity="0.8"/><path d="M1332,63.5 h5 l-2.5,3 z" fill="#4A6FA5"/>
<text x="1274.3" y="86.5" font-size="9" fill="#3A3A3A" textLength="5" lengthAdjust="spacingAndGlyphs" font-weight="bold">a</text>
<text x="1279.6" y="86.5" font-size="9.5" fill="#ABABAB" textLength="5.4" lengthAdjust="spacingAndGlyphs" font-weight="bold">b</text>
<path d="M1275.8,88.2 L1277.8,91 H1280.5" fill="none" stroke="#23387A" stroke-width="0.9"/><path d="M1279.5,89.6 L1281.2,91 L1279.5,92.4 Z" fill="#23387A"/>
<text x="1281" y="93.6" font-size="9" fill="#3A3A3A" textLength="5" lengthAdjust="spacingAndGlyphs" font-weight="bold">a</text>
<text x="1286" y="93.6" font-size="9" fill="#1F9A1F" textLength="4.8" lengthAdjust="spacingAndGlyphs" font-weight="bold">c</text>
<text x="1293.3" y="90.7" font-size="11.3" fill="#1C3C8C" textLength="50.7" lengthAdjust="spacingAndGlyphs">Заменить</text>
<path d="M1277.5,101.5 V113 L1280,110.5 L1282.5,115.5 L1284.5,114.5 L1282,109.5 H1285.5 Z" fill="#FFFFFF" stroke="#3C4A68" stroke-width="0.9"/>
<text x="1293.3" y="112.6" font-size="11.3" fill="#1C3C8C" textLength="50.7" lengthAdjust="spacingAndGlyphs">Выделить</text>
<path d="M1348,109 h5 l-2.5,3 z" fill="#FFFFFF" fill-opacity="0.8"/><path d="M1348,108 h5 l-2.5,3 z" fill="#4A6FA5"/>
<path d="M37.5,2.5 H122 A10.5,10.5 0 0 1 122,23.5 H46.5 Q46,10 37.5,2.5 Z" fill="#EDF1F7" stroke="#8C9199" stroke-width="1"/>
<rect x="53.5" y="6.5" width="13" height="13" rx="1" fill="#5454C4" stroke="#2E2E90" stroke-width="0.8"/>
<rect x="56" y="7" width="8.5" height="6" fill="#F4F6FC"/>
<rect x="57" y="15" width="6" height="4" fill="#1A1A40"/><rect x="58" y="16" width="2" height="2" fill="#E0E0F0"/>
<path d="M78.5,10 Q85,6 87,11.5 Q88,16 83.5,18.5" fill="none" stroke="#3C78D8" stroke-width="2.2" stroke-linecap="round"/>
<path d="M76,8 L76.5,14.5 L82.5,13 Z" fill="#3C78D8"/>
<path d="M94,11 h5 l-2.5,3 z" fill="#4A6FA5"/>
<path d="M112.2,8.6 A5,5 0 1 0 118.6,11" fill="none" stroke="#A9B9CE" stroke-width="2.4"/>
<path d="M115.3,6.2 L120.6,6.8 L119.2,12 Z" fill="#A9B9CE"/>
<rect x="141" y="9" width="5.5" height="1.3" fill="#1E3A78"/><path d="M141,11.5 h5.5 l-2.75,3.5 z" fill="#1E3A78"/>
<circle cx="22" cy="22.3" r="18" fill="url(#obtn)" stroke="#8D98AA" stroke-width="1"/>
<path d="M5,22 Q22,19 39,22" fill="none" stroke="#FFFFFF" stroke-opacity="0.5"/>
<path d="M21.3,18.6 V13.6 Q21.3,12.2 19.9,12.2 H14.1 Q12.7,12.2 12.7,13.6 V19.7 Q12.7,21.1 14.1,21.1 H18.6" fill="none" stroke="#E0500E" stroke-width="2.5" stroke-linecap="round"/>
<path d="M24.9,19.8 V17.7 Q24.9,16.9 25.7,16.9 H28.9 Q29.7,16.9 29.7,17.7 V20.9 Q29.7,21.7 28.9,21.7 H26.9" fill="none" stroke="#2F8AE0" stroke-width="1.7" stroke-linecap="round"/>
<path d="M18.6,25.3 H15.6 Q14.2,25.3 14.2,26.7 V30.9 Q14.2,32.3 15.6,32.3 H19.9 Q21.3,32.3 21.3,30.9 V28.3" fill="none" stroke="#F7A81A" stroke-width="2.5" stroke-linecap="round"/>
<path d="M27.4,25.2 H29.9 Q31.3,25.2 31.3,26.6 V29.9 Q31.3,31.3 29.9,31.3 H26.6 Q25.2,31.3 25.2,29.9 V27.6" fill="none" stroke="#3E9A2C" stroke-width="2.5" stroke-linecap="round"/>
<circle cx="21.4" cy="21.5" r="1.1" fill="#E24A10"/><circle cx="25.3" cy="21.2" r="1" fill="#2F7FD8"/>
<circle cx="21.4" cy="25.5" r="1.1" fill="#F7B21B"/><circle cx="25.3" cy="25.4" r="1.1" fill="#52B030"/>
<rect x="1349" y="139" width="17" height="568" fill="#A9C6EA"/>
<rect x="1353" y="144" width="9" height="2" fill="#3A4A60"/>
<rect x="1351.5" y="151.5" width="10" height="9" fill="#F2F4F8" stroke="#3A4A60" stroke-width="0.9"/>
<path d="M1353,153.5 l2,2 M1358,153.5 l2,2 M1355,157 l2,2" stroke="#3A4A60" stroke-width="0.8"/>
<rect x="1349.5" y="165" width="16" height="490" fill="url(#sbtrack)"/>
<rect x="1349" y="165" width="1" height="490" fill="#C2D6F0"/>
<path d="M1353,177 h9 l-4.5,-4 z" fill="#465A80"/>
<path d="M1353,642.5 h9 l-4.5,4 z" fill="#465A80"/>
<rect x="1350.5" y="241.5" width="14" height="219" rx="1.5" fill="url(#sbthumb)" stroke="#7088AE" stroke-width="1"/>
<rect x="1353.5" y="346" width="8" height="1" fill="#5E6678"/>
<rect x="1353.5" y="348" width="8" height="1" fill="#5E6678"/>
<rect x="1353.5" y="350" width="8" height="1" fill="#5E6678"/>
<rect x="1353.5" y="352" width="8" height="1" fill="#5E6678"/>
<path d="M1354.5,663.5 l3,-3 l3,3 z M1354.5,666.5 l3,-3 l3,3 z" fill="#111"/>
<circle cx="1357.5" cy="679.5" r="3" fill="#9A9A9A" stroke="#333" stroke-width="0.7"/><circle cx="1356.8" cy="678.7" r="1.2" fill="#F0F0F0"/>
<path d="M1354.5,692.5 l3,3 l3,-3 z M1354.5,695.5 l3,3 l3,-3 z" fill="#111"/>
<text x="8" y="721" font-size="11" fill="#1C3C8C" textLength="87.2" lengthAdjust="spacingAndGlyphs">Страница: 1 из 1</text>
<text x="113.9" y="721" font-size="11" fill="#1C3C8C" textLength="82.8" lengthAdjust="spacingAndGlyphs">Число слов: 323</text>
<text x="247.2" y="721" font-size="11" fill="#1C3C8C" textLength="85.6" lengthAdjust="spacingAndGlyphs">Русский (Россия)</text>
<rect x="104.5" y="709" width="1" height="17" fill="#9FB7D8"/><rect x="105.5" y="709" width="1" height="17" fill="#FFFFFF" fill-opacity="0.6"/>
<rect x="205.5" y="709" width="1" height="17" fill="#9FB7D8"/><rect x="206.5" y="709" width="1" height="17" fill="#FFFFFF" fill-opacity="0.6"/>
<rect x="352.5" y="709" width="1" height="17" fill="#9FB7D8"/><rect x="353.5" y="709" width="1" height="17" fill="#FFFFFF" fill-opacity="0.6"/>
<path d="M214,716 Q218,711.5 222.5,713 Q226,711.5 230,715.5 L230,719.5 L220,724 L214,716 Z" fill="#FAFBFD" stroke="#9A9EA6" stroke-width="0.6"/>
<path d="M214,716.3 L219.8,723.8 L229.8,719.3" fill="none" stroke="#3A62C8" stroke-width="1.6"/>
<path d="M221.5,709.5 L229,717.5 M229,710 L223,717.5" stroke="#F03418" stroke-width="2"/>
<rect x="1084" y="708" width="282" height="20" fill="url(#statR)"/>
<rect x="1084" y="708" width="1" height="20" fill="#6C8FC4"/><rect x="1085" y="708" width="1" height="20" fill="#FFFFFF" fill-opacity="0.8"/>
<rect x="1090.5" y="708.5" width="91.5" height="18" rx="2" fill="#C9DBF3" stroke="#6F93C8"/>
<rect x="1091.5" y="709.5" width="17.5" height="16" fill="url(#orng)"/>
<rect x="1109" y="709" width="1" height="17" fill="#9DB8DE"/>
<rect x="1127" y="709" width="1" height="17" fill="#9DB8DE"/>
<rect x="1145" y="709" width="1" height="17" fill="#9DB8DE"/>
<rect x="1163" y="709" width="1" height="17" fill="#9DB8DE"/>
<rect x="1095.5" y="711.5" width="9" height="11" fill="#FFFFFF" stroke="#333" stroke-width="0.9"/>
<rect x="1097" y="714" width="6" height="0.9" fill="#333"/>
<rect x="1097" y="716.2" width="6" height="0.9" fill="#333"/>
<rect x="1097" y="718.4" width="6" height="0.9" fill="#333"/>
<rect x="1097" y="720.6" width="6" height="0.9" fill="#333"/>
<path d="M1113.5,712 H1118 V723 H1113.5 Z M1118.5,712 H1123 V723 H1118.5 Z" fill="#FFFFFF" stroke="#333" stroke-width="0.9"/>
<rect x="1131.5" y="711.5" width="9" height="9" fill="#FFFFFF" stroke="#333" stroke-width="0.9"/><circle cx="1140.5" cy="721" r="2.8" fill="#3A8A3A" stroke="#1F4F9F" stroke-width="0.7"/>
<rect x="1149" y="713" width="9" height="0.9" fill="#333"/>
<rect x="1153" y="713" width="5" height="0.9" fill="#333"/>
<rect x="1149" y="715.5" width="3" height="0.9" fill="#333"/>
<rect x="1153" y="715.5" width="5" height="0.9" fill="#333"/>
<rect x="1149" y="718" width="9" height="0.9" fill="#333"/>
<rect x="1153" y="718" width="5" height="0.9" fill="#333"/>
<rect x="1149" y="720.5" width="3" height="0.9" fill="#333"/>
<rect x="1153" y="720.5" width="5" height="0.9" fill="#333"/>
<rect x="1167" y="713" width="10" height="1" fill="#333"/>
<rect x="1167" y="715.5" width="10" height="1" fill="#333"/>
<rect x="1167" y="718" width="10" height="1" fill="#333"/>
<rect x="1167" y="720.5" width="10" height="1" fill="#333"/>
<rect x="1167" y="723" width="10" height="1" fill="#333"/>
<text x="1191.9" y="721" font-size="11" fill="#1C3C8C" textLength="26.3" lengthAdjust="spacingAndGlyphs">100%</text>
<rect x="1242" y="716" width="104" height="1" fill="#5F82B8"/><rect x="1242" y="717" width="104" height="1.3" fill="#F2F2F2"/>
<circle cx="1235" cy="717" r="7.5" fill="#E6EEF9" stroke="#2E5190" stroke-width="1.1"/><rect x="1231" y="716.3" width="8" height="1.8" fill="#3A4A66"/>
<circle cx="1353" cy="716.8" r="7.5" fill="#E6EEF9" stroke="#2E5190" stroke-width="1.1"/><rect x="1349" y="716" width="8" height="1.8" fill="#3A4A66"/><rect x="1352.1" y="713" width="1.8" height="8" fill="#3A4A66"/>
<path d="M1289.5,710.5 H1297.5 V719.5 L1293.5,723 L1289.5,719.5 Z" fill="#F6F8FC" stroke="#3A62A8" stroke-width="1"/>
<rect x="1293" y="713" width="1" height="5" fill="#8095B5"/>
<rect x="197" y="731" width="48" height="37" fill="#31363D"/>
<rect x="197" y="728" width="48" height="3" fill="#8A8A8A"/>
<rect x="152" y="766" width="40" height="2" fill="#76B9ED"/>
<rect x="197" y="766" width="48" height="2" fill="#76B9ED"/>
<path d="M412,728.3 H419.5 L416.5,730.5 V731 H414.5 V730.5 Z" fill="#222"/>
<path d="M16,741.5 L23.3,740.5 V747.5 H16 Z M24.3,740.3 L32,739.2 V747.5 H24.3 Z M16,748.5 H23.3 V755.5 L16,754.5 Z M24.3,748.5 H32 V756.8 L24.3,755.7 Z" fill="#FFFFFF"/>
<rect x="66.5" y="741.5" width="12" height="13" fill="none" stroke="#FFFFFF" stroke-width="1"/>
<path d="M64.5,743.5 H62.5 V752.5 H64.5 M80.5,743.5 H82.5 V752.5 H80.5" fill="none" stroke="#FFFFFF" stroke-width="1"/>
<path d="M112,739.5 H120 L121.5,741 H133.5 V756.5 H112 Z" fill="#F9DC84"/>
<rect x="112" y="739" width="9" height="2.2" fill="#EDC35A"/><rect x="113" y="739.6" width="2" height="1" fill="#5AB0E8"/>
<rect x="112" y="742" width="21.5" height="14.5" fill="#FCE49A"/>
<path d="M116.5,757 V748.5 H130 V757 H127 V751.5 H119.5 V757 Z" fill="#3BA9EA"/>
<defs><linearGradient id="opg" x1="0" y1="0" x2="1" y2="1"><stop offset="0" stop-color="#FF3A44"/><stop offset="0.6" stop-color="#D4101C"/><stop offset="1" stop-color="#A00A14"/></linearGradient></defs>
<ellipse cx="172" cy="748" rx="11.3" ry="11.1" fill="url(#opg)"/>
<ellipse cx="172.1" cy="748.5" rx="6" ry="7.6" fill="#050A12"/>
<path d="M212,737 Q222,735 231,736.5 L232,757.5 Q222,759 211,757 Z" fill="#EEF3FB" stroke="#9FB3D8" stroke-width="0.6"/>
<path d="M209.5,757 Q208.5,745 213,737.5 Q216,736.5 218,736.5 Q213.5,745 214.5,757.5 Z" fill="#2E5FC0"/>
<path d="M217,741.5 L218.5,749.5 L220.5,744 L222.5,749.5 L225.5,741.5" fill="none" stroke="#2A58B8" stroke-width="1.8"/>
<rect x="223" y="743" width="6" height="1.2" fill="#2A58B8"/><rect x="223" y="746" width="6" height="1.2" fill="#2A58B8"/>
<rect x="216" y="750.5" width="13" height="1.3" fill="#3464C0"/>
<rect x="216" y="752.8" width="13" height="1.3" fill="#3464C0"/>
<rect x="216" y="755" width="13" height="1.3" fill="#3464C0"/>
<path d="M1145.5,752 L1151,746.5 L1156.5,752" fill="none" stroke="#FFFFFF" stroke-width="1.1"/>
<rect x="1170.5" y="742.5" width="12" height="9" fill="none" stroke="#FFFFFF" stroke-width="1"/>
<rect x="1167.5" y="742.5" width="4" height="3" fill="#060A12" stroke="#FFFFFF" stroke-width="1"/>
<path d="M1176.5,752 V754.5 M1172,755 H1181 M1169.5,746 V755.5" fill="none" stroke="#FFFFFF" stroke-width="1"/>
<path d="M1191.5,745.5 H1194 L1198,742 V754.5 L1194,751 H1191.5 Z" fill="none" stroke="#FFFFFF" stroke-width="1"/>
<path d="M1200.5,745.5 Q1202.5,748 1200.5,751 M1203,743.5 Q1206,748 1203,753 M1205.5,742 Q1209.5,748 1205.5,754.5" fill="none" stroke="#FFFFFF" stroke-width="0.9" stroke-opacity="0.8"/>
<text x="1218" y="753" font-size="12" fill="#FFFFFF" textLength="22.5" lengthAdjust="spacingAndGlyphs">РУС</text>
<text x="1267" y="743.2" font-size="12" fill="#FFFFFF" textLength="26" lengthAdjust="spacingAndGlyphs">12:20</text>
<text x="1253" y="761.8" font-size="12" fill="#FFFFFF" textLength="54.5" lengthAdjust="spacingAndGlyphs">03.01.2020</text>
<path d="M1325.5,740.5 H1341.5 V752.5 H1336 L1333.5,755.5 L1331,752.5 H1325.5 Z" fill="none" stroke="#FFFFFF" stroke-width="1"/>
<rect x="1361" y="728" width="1" height="40" fill="#5A5E66"/>
</svg>
</body></html>
